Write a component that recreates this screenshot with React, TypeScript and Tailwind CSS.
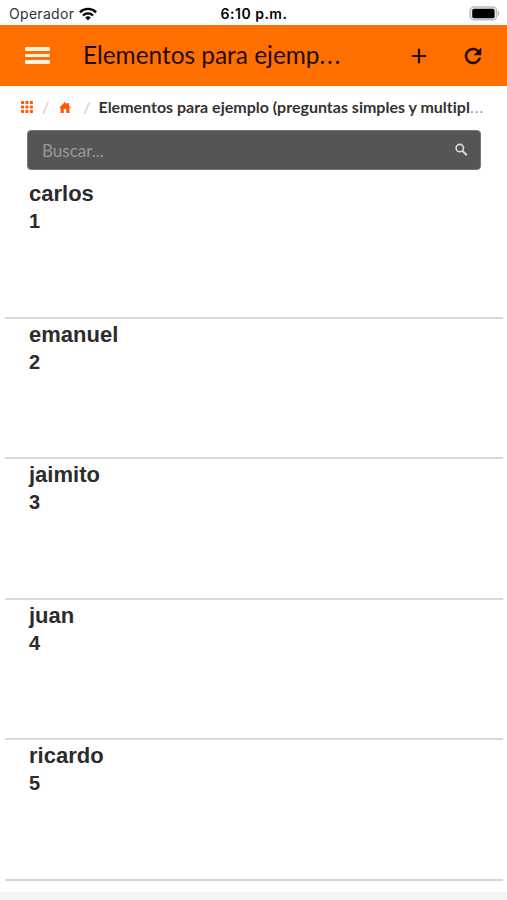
const items = [
  { name: "carlos", value: 1 },
  { name: "emanuel", value: 2 },
  { name: "jaimito", value: 3 },
  { name: "juan", value: 4 },
  { name: "ricardo", value: 5 },
];

function WifiIcon() {
  return (
    <svg viewBox="0 0 18 14" className="w-[18px] h-[14px] shrink-0" fill="none" stroke="#000" strokeWidth="2.4">
      <path d="M0.9 5.3a11.4 11.4 0 0 1 16.2 0" />
      <path d="M4 8.5a7 7 0 0 1 10 0" />
      <path d="M9 13.4 6.2 10.6a4 4 0 0 1 5.6 0z" fill="#000" stroke="none" />
    </svg>
  );
}

function BatteryIcon() {
  return (
    <svg viewBox="0 0 31 15" className="w-[31px] h-[15px]">
      <rect x="1.1" y="1" width="26.6" height="12.8" rx="4" fill="#eee" stroke="#bdbdbd" strokeWidth="1.5" />
      <rect x="3.2" y="2.8" width="22.4" height="9.4" rx="2" fill="#000" />
      <path d="M29 5.2c1.8.6 1.8 4 0 4.6z" fill="#b5b5b5" />
    </svg>
  );
}

function GridIcon() {
  return (
    <svg viewBox="0 0 12 12" className="w-3 h-3" fill="#ff5a0a">
      {[0, 4.4, 8.8].map((y) =>
        [0, 4.4, 8.8].map((x) => <rect key={`${x}-${y}`} x={x} y={y} width="3.1" height="3.1" rx="0.6" />)
      )}
    </svg>
  );
}

function HomeIcon() {
  return (
    <svg viewBox="0 0 12 11" className="w-3 h-[11px]" fill="#ff5a0a">
      <path d="M6 0 0 5.7h1.5V11h3.3V7h2.4v4h3.3V5.7H12L10 3.8V1H8.4v1.3z" />
    </svg>
  );
}

function AddIcon() {
  return (
    <svg viewBox="0 0 24 24" className="w-6 h-6 mr-[30px]" fill="none" stroke="currentColor" strokeWidth="2.2">
      <path d="M12 4.8v14.4M4.8 12h14.4" />
    </svg>
  );
}

function RefreshIcon() {
  return (
    <svg viewBox="0 0 24 24" className="w-6 h-6" fill="currentColor" stroke="currentColor" strokeWidth="0.5">
      <path d="M17.65 6.35A7.96 7.96 0 0 0 12 4a8 8 0 1 0 7.73 10h-2.08A6 6 0 1 1 12 6c1.66 0 3.14.69 4.22 1.78L13 11h7V4z" />
    </svg>
  );
}

function SearchIcon() {
  return (
    <svg viewBox="0 0 16 16" className="w-4 h-4" fill="none" stroke="#ddd">
      <circle cx="6.8" cy="6.1" r="3.7" strokeWidth="1.6" />
      <path d="m9.5 8.9 4.3 4.3" strokeWidth="2" />
    </svg>
  );
}

export default function App() {
  return (
    <div className="w-full h-[900px] overflow-hidden bg-white flex flex-col font-['Lato',sans-serif] [font-variant-ligatures:none]">
      <div className="h-[25px] shrink-0 grid grid-cols-[1fr_auto_1fr] items-center pl-[8px] pr-[7px] pt-[2px] font-['Inter',sans-serif] text-black">
        <div className="flex items-center gap-[5px] pl-px">
          <span className="text-[14px] text-[#333] tracking-[0.3px]">Operador</span>
          <WifiIcon />
        </div>
        <span className="text-[14px] font-semibold tracking-[0.5px] whitespace-nowrap">6:10 p.m.</span>
        <div className="flex justify-end">
          <BatteryIcon />
        </div>
      </div>

      <header className="h-[61px] shrink-0 bg-[#ff6f00] flex items-center pl-[25px] pr-[22px] text-[#1f0d00]">
        <div className="flex flex-col gap-[3px] w-[25px]">
          <span className="h-[3.5px] rounded-[1px] bg-[#fff2e0]" />
          <span className="h-[3.5px] rounded-[1px] bg-[#fff2e0]" />
          <span className="h-[3.5px] rounded-[1px] bg-[#fff2e0]" />
        </div>
        <h1 className="ml-[33px] pb-px flex-1 text-[24.4px] leading-[30px] whitespace-nowrap">
          Elementos para ejemp<span className="tracking-[1.8px]">...</span>
        </h1>
        <AddIcon />
        <RefreshIcon />
      </header>

      <nav className="h-[42px] mb-[2px] shrink-0 flex items-center pl-[21px] text-[16px] text-[#ccc]">
        <GridIcon />
        <span className="ml-[9px]">/</span>
        <span className="ml-[10px]">
          <HomeIcon />
        </span>
        <span className="ml-[12px]">/</span>
        <span className="ml-[8px] font-bold text-[#333] whitespace-nowrap">
          Elementos para ejemplo (preguntas simples y multipl
          <span className="font-normal text-[#999] tracking-[1px]">...</span>
        </span>
      </nav>

      <div className="h-[40px] shrink-0 ml-[27px] mr-[26px] rounded-[4px] border border-[#777] bg-[#555] flex items-center justify-between pl-[14px] pr-[11px]">
        <span className="pt-[2px] text-[17px] text-[#999]">Buscar...</span>
        <SearchIcon />
      </div>

      <ul className="mt-[8px] ml-[5px] mr-[4px] shrink-0 font-['Liberation_Sans',sans-serif] font-bold text-[#2c2c2c]">
        {items.map((item) => (
          <li key={item.name} className="h-[140.5px] pl-[24px] pt-[2px] border-b-2 border-[#d8d8d8]">
            <div className="text-[22px] leading-[27px]">{item.name}</div>
            <div className="pt-px text-[20px] leading-[27px]">{item.value}</div>
          </li>
        ))}
      </ul>

      <div className="mt-auto h-[8px] shrink-0 bg-[#f4f4f4]" />
    </div>
  );
}
